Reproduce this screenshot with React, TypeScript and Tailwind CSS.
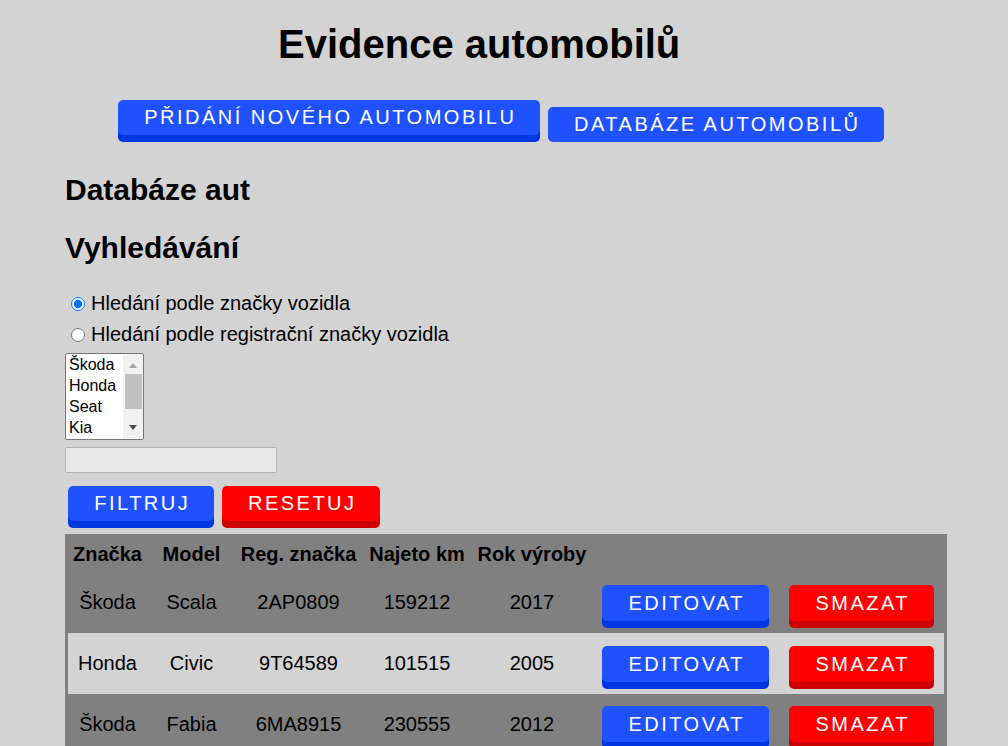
import React from "react";

const font = "font-['Liberation_Sans',Arial,sans-serif]";

function BlueBtn({ children, className = "" }: { children: React.ReactNode; className?: string }) {
  return (
    <div
      className={`flex h-[35px] items-center justify-center rounded-[5px] bg-[#1f51ff] pl-[2.5px] text-[20px] leading-[23px] tracking-[2.5px] text-white shadow-[0_7px_0_#0037e3] ${className}`}
    >
      {children}
    </div>
  );
}

function RedBtn({ children, className = "" }: { children: React.ReactNode; className?: string }) {
  return (
    <div
      className={`flex h-[35px] items-center justify-center rounded-[5px] bg-[#ff0000] pl-[2.5px] text-[20px] leading-[23px] tracking-[2.5px] text-white shadow-[0_7px_0_#cc0000] ${className}`}
    >
      {children}
    </div>
  );
}

const rows = [
  ["Škoda", "Scala", "2AP0809", "159212", "2017"],
  ["Honda", "Civic", "9T64589", "101515", "2005"],
  ["Škoda", "Fabia", "6MA8915", "230555", "2012"],
];

const colW = ["w-[79px]", "w-[89px]", "w-[125px]", "w-[112px]", "w-[118px]"];

export default function App() {
  return (
    <div className={`min-h-screen bg-[#d3d3d3] text-black ${font}`}>
      <h1 className="pl-[278px] pt-[21px] text-[40px] font-bold leading-[46px]">Evidence automobilů</h1>

      <div className="mt-[33px] flex items-start gap-[8px] pl-[118px]">
        <BlueBtn className="mb-[7px] w-[422px]">PŘIDÁNÍ NOVÉHO AUTOMOBILU</BlueBtn>
        <div className="mt-[7px] flex h-[35px] w-[336px] items-center justify-center rounded-[5px] bg-[#1f51ff] pl-[2.5px] text-[20px] leading-[23px] tracking-[2.5px] text-white">
          DATABÁZE AUTOMOBILŮ
        </div>
      </div>

      <div className="pl-[65px]">
        <h2 className="mt-[31px] text-[30px] font-bold leading-[34px]">Databáze aut</h2>
        <h2 className="mt-[24px] text-[30px] font-bold leading-[34px]">Vyhledávání</h2>

        <div className="mt-[27px] flex flex-col gap-[8px] text-[20px] leading-[23px]">
          <label className="flex h-[23px] items-center">
            <input type="radio" name="mode" defaultChecked className="m-0 ml-[6px] mr-[6px] h-[14px] w-[14px]" />
            <span>Hledání podle značky vozidla</span>
          </label>
          <label className="flex h-[23px] items-center">
            <input type="radio" name="mode" className="m-0 ml-[6px] mr-[6px] h-[14px] w-[14px]" />
            <span>Hledání podle registrační značky vozidla</span>
          </label>
        </div>

        <div className="mt-[7px] flex h-[87px] w-[79px] overflow-hidden rounded-[2px] border border-[#767676] bg-white">
          <div className="flex-1 pl-[3px] pt-0 text-[16px] leading-[21px]">
            <div>Škoda</div>
            <div>Honda</div>
            <div>Seat</div>
            <div>Kia</div>
          </div>
          <div className="relative w-[20px] bg-[#f1f1f1]">
            <svg className="absolute left-[6px] top-[9px]" width="8" height="5" viewBox="0 0 8 5">
              <polygon points="0,5 8,5 4,0" fill="#a3a3a3" />
            </svg>
            <div className="absolute left-[2px] right-[1px] top-[20px] h-[35px] bg-[#c1c1c1]" />
            <svg className="absolute left-[6px] top-[71px]" width="8" height="5" viewBox="0 0 8 5">
              <polygon points="0,0 8,0 4,5" fill="#505050" />
            </svg>
          </div>
        </div>

        <div className="mt-[7px] h-[26px] w-[212px] rounded-[2px] border border-[#b3b3b3] bg-[#e8e8e8]" />

        <div className="mt-[13px] flex gap-[8px] pl-[3px]">
          <BlueBtn className="w-[146px]">FILTRUJ</BlueBtn>
          <RedBtn className="w-[158px]">RESETUJ</RedBtn>
        </div>

        <div className="mt-[13px] w-[882px] bg-[#808080] px-[3px] pt-[3px]">
          <div className="flex h-[35px] items-center text-[20px] font-bold leading-[23px]">
            {["Značka", "Model", "Reg. značka", "Najeto km", "Rok výroby"].map((h, i) => (
              <div key={h} className={`${colW[i]} whitespace-nowrap text-center`}>
                {h}
              </div>
            ))}
          </div>
          {rows.map((r, ri) => (
            <div
              key={ri}
              className={`flex h-[61px] text-[20px] leading-[23px] ${ri === 1 ? "bg-[#d3d3d3]" : ""}`}
            >
              {r.map((c, i) => (
                <div key={i} className={`${colW[i]} flex items-center justify-center whitespace-nowrap`}>
                  {c}
                </div>
              ))}
              <div className={`w-[189px] pl-[11px] ${ri === 2 ? "pt-[12px]" : "pt-[13px]"}`}>
                <BlueBtn className="h-[36px] w-[167px]">EDITOVAT</BlueBtn>
              </div>
              <div className={`pl-[9px] ${ri === 2 ? "pt-[12px]" : "pt-[13px]"}`}>
                <RedBtn className="h-[36px] w-[145px]">SMAZAT</RedBtn>
              </div>
            </div>
          ))}
        </div>
      </div>
    </div>
  );
}
